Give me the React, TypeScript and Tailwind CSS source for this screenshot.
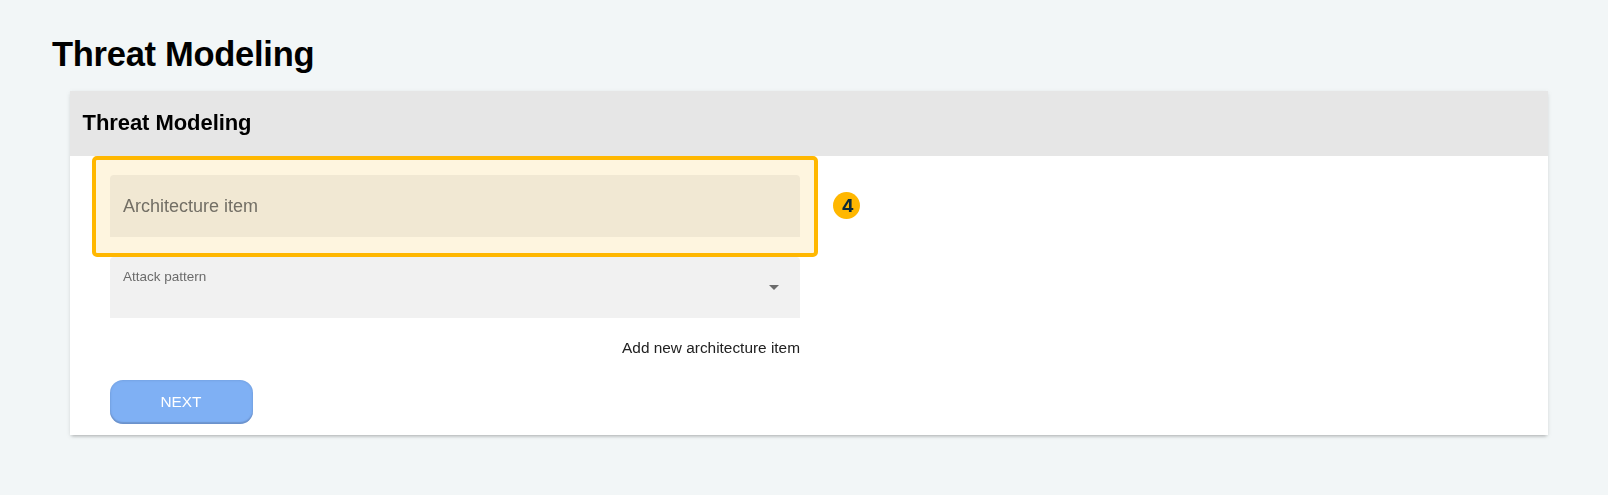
export default function App() {
  return (
    <div className="flex h-[495px] w-[1608px] flex-col overflow-hidden bg-[#f2f6f7] font-['Liberation_Sans',Arial,sans-serif] text-black">
      <h1 className="mt-[34px] ml-[52px] h-[57px] text-[34.5px] leading-[40px] font-bold tracking-[-0.28px]">
        Threat Modeling
      </h1>
      <section className="relative isolate ml-[70px] flex h-[344px] w-[1478px] flex-col bg-white shadow-[0_3px_3px_-2px_rgba(0,0,0,0.2),0_2px_4px_0_rgba(0,0,0,0.08),0_1px_6px_0_rgba(0,0,0,0.05)]">
        <header className="flex h-[65px] shrink-0 items-center bg-[#e6e6e6] pb-[2px] pl-[12.5px]">
          <h2 className="text-[22px] leading-6 font-bold tracking-[-0.06px]">Threat Modeling</h2>
        </header>
        <div className="flex w-[730px] flex-col pt-[19px] pl-[40px]">
          <div className="flex h-[62px] items-center rounded-t bg-[#f2f2f2] pl-[13px]">
            <span className="text-[18px] leading-6 text-[#737373]">Architecture item</span>
          </div>
          <div className="mt-5 flex h-[61px] justify-between rounded-t bg-[#f1f1f1] pl-[13px]">
            <span className="mt-[12px] text-[13.5px] leading-4 text-[#6b6b6b]">Attack pattern</span>
            <svg className="mt-[28px] mr-[21px] h-[5px] w-[10px]" viewBox="0 0 10 5" fill="#6b6b6b">
              <path d="M0 0h10L5 5z" />
            </svg>
          </div>
          <a className="mt-5 self-end text-[15.4px] leading-5 text-[#212121]">
            Add new architecture item
          </a>
          <button className="mt-[22px] flex h-[44px] w-[143px] items-center justify-center rounded-[13px] bg-[#7fb0f4] pr-[1px] pb-[1px] text-[15.4px] leading-5 text-white shadow-[inset_0_-2px_1px_0_rgba(80,100,140,0.3),inset_0_0_2px_1px_rgba(80,110,160,0.18)]">
            NEXT
          </button>
        </div>
        <div className="absolute top-[65px] left-[22px] h-[101px] w-[726px] rounded-[5px] border-4 border-[#ffb700] bg-[#fef5df] mix-blend-multiply" />
        <div className="absolute top-[101px] left-[763px] flex h-[27px] w-[27px] items-center justify-center rounded-full bg-[#ffb700] pt-[1px] pl-[2px] text-[#0b2a38]">
          <span className="scale-x-110 font-['Inter',sans-serif] text-[17px] leading-none font-bold">4</span>
        </div>
      </section>
    </div>
  );
}
